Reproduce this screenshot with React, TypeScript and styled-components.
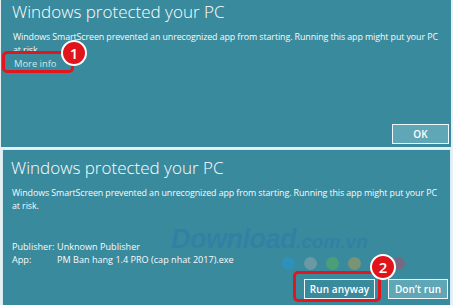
import React from "react";
import styled, { createGlobalStyle } from "styled-components";

const Global = createGlobalStyle`
  html, body { margin: 0; padding: 0; background: #dce8ec; }
  body { font-family: "Open Sans", "Noto Sans", sans-serif; }
`;

const TEAL = "#3a8a9d";
const LIGHT = "#5fa6b7";

const Page = styled.div`
  width: 453px;
  height: 305px;
  overflow: hidden;
  display: flex;
  flex-direction: column;
  gap: 2px;
  background: #e6f0f2;
`;

const Panel = styled.section<{ $inset: number; $bordered?: boolean }>`
  position: relative;
  margin-left: ${(p) => p.$inset}px;
  width: ${(p) => 451 - p.$inset}px;
  box-sizing: border-box;
  background: ${TEAL};
  color: #f4fafc;
  display: flex;
  flex-direction: column;
  border: ${(p) => (p.$bordered ? "1px solid #d6ecf1" : "none")};
  border-bottom: none;
`;

const TopPanel = styled(Panel)`
  height: 147px;
  padding: 0 2px 3px 11px;
`;

const BottomPanel = styled(Panel)`
  flex: 1;
  padding: 6px 2px 6px 8px;
`;

const Title = styled.h1`
  margin: 0;
  font-weight: 300;
  font-size: 17px;
  line-height: 24px;
  color: #fff;
`;

const Body = styled.p`
  margin: 6px 0 0 1px;
  max-width: 430px;
  font-size: 8.9px;
  letter-spacing: -0.1px;
  line-height: 13px;
  color: #f6fbfc;
`;

const MoreInfo = styled.span`
  margin: 1px 0 0 2px;
  font-size: 9.4px;
  line-height: 13px;
  color: #d2e6ec;
  align-self: flex-start;
`;

const Spacer = styled.div`
  flex: 1;
`;

const Footer = styled.div`
  display: flex;
  justify-content: flex-end;
  gap: 13px;
`;

const Button = styled.button<{ $filled?: boolean; $w: number }>`
  box-sizing: border-box;
  height: 20px;
  width: ${(p) => p.$w}px;
  padding: 0;
  background: ${(p) => (p.$filled ? LIGHT : TEAL)};
  border: 1.5px solid #eef8fa;
  color: #fff;
  font-family: "Open Sans", sans-serif;
  font-size: 10px;
  font-weight: 600;
  letter-spacing: 0.1px;
`;

const Details = styled.div`
  margin-top: 28px;
  display: grid;
  grid-template-columns: 45px 1fr;
  font-size: 9.1px;
  line-height: 13px;
  color: #f6fbfc;
  padding-left: 1px;
`;

const Highlight = styled.div<{ $x: number; $y: number; $w: number; $h: number }>`
  position: absolute;
  left: ${(p) => p.$x}px;
  top: ${(p) => p.$y}px;
  width: ${(p) => p.$w}px;
  height: ${(p) => p.$h}px;
  box-sizing: border-box;
  border: 3.5px solid #e3161d;
  border-radius: 5px;
`;

const Badge = styled.div<{ $x: number; $y: number }>`
  position: absolute;
  left: ${(p) => p.$x - 13}px;
  top: ${(p) => p.$y - 13}px;
  width: 26px;
  height: 26px;
  box-sizing: border-box;
  border-radius: 50%;
  background: #e0141b;
  border: 2px solid #fff;
  color: #fff;
  font-family: "Open Sans", sans-serif;
  font-size: 15px;
  font-weight: 600;
  display: flex;
  align-items: center;
  justify-content: center;
  line-height: 1;
`;

const Watermark = styled.div`
  position: absolute;
  left: 168px;
  top: 74px;
  display: flex;
  align-items: baseline;
  font-family: "Liberation Sans", Arial, sans-serif;
  font-style: italic;
  font-weight: 700;
  color: #2b6fb5;
  opacity: 0.35;
  pointer-events: none;
`;

const WatermarkBig = styled.span`
  font-size: 27px;
  letter-spacing: -0.5px;
`;

const WatermarkSmall = styled.span`
  font-size: 19px;
`;

const Dots = styled.div`
  position: absolute;
  left: 279px;
  top: 107px;
  display: flex;
  gap: 9px;
`;

const Dot = styled.span<{ $c: string }>`
  width: 13px;
  height: 13px;
  border-radius: 50%;
  background: ${(p) => p.$c};
  opacity: 0.45;
`;

export default function App() {
  return (
    <>
      <Global />
      <Page>
        <TopPanel $inset={1}>
          <Title>Windows protected your PC</Title>
          <Body>
            Windows SmartScreen prevented an unrecognized app from starting. Running this app might put your PC
            at risk.
          </Body>
          <MoreInfo>More info</MoreInfo>
          <Spacer />
          <Footer>
            <Button $filled $w={57}>OK</Button>
          </Footer>
          <Highlight $x={1} $y={51} $w={72} $h={22} />
          <Badge $x={73} $y={53}>1</Badge>
        </TopPanel>
        <BottomPanel $inset={2} $bordered>
          <Title>Windows protected your PC</Title>
          <Body>
            Windows SmartScreen prevented an unrecognized app from starting. Running this app might put your PC
            at risk.
          </Body>
          <Details>
            <span>Publisher:</span>
            <span>Unknown Publisher</span>
            <span>App:</span>
            <span>PM Ban hang 1.4 PRO (cap nhat 2017).exe</span>
          </Details>
          <Spacer />
          <Footer>
            <Button $w={71}>Run anyway</Button>
            <Button $filled $w={60}>Don’t run</Button>
          </Footer>
          <Watermark>
            <WatermarkBig>Download</WatermarkBig>
            <WatermarkSmall>.com.vn</WatermarkSmall>
          </Watermark>
          <Dots>
            <Dot $c="#1e9be0" />
            <Dot $c="#a9a9a9" />
            <Dot $c="#5fb84a" />
            <Dot $c="#c8a040" />
            <Dot $c="#2f6fb8" />
            <Dot $c="#c04060" />
          </Dots>
          <Highlight $x={290} $y={121} $w={88} $h={31} />
          <Badge $x={380} $y={117}>2</Badge>
        </BottomPanel>
      </Page>
    </>
  );
}
